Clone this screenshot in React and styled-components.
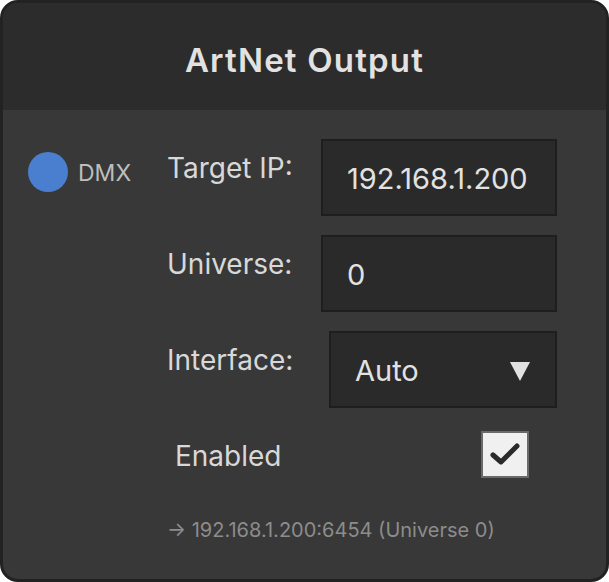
import React from 'react';
import styled, { createGlobalStyle } from 'styled-components';

const GlobalStyle = createGlobalStyle`
  html, body {
    margin: 0;
    padding: 0;
    background: #ffffff;
  }
  * {
    box-sizing: border-box;
  }
`;

const Panel = styled.div`
  width: 609px;
  height: 582px;
  border: 3px solid #222222;
  border-radius: 18px;
  overflow: hidden;
  background: #383838;
  font-family: Inter, "Noto Sans", sans-serif;
  display: flex;
  flex-direction: column;
`;

const Header = styled.header`
  height: 107px;
  padding-top: 7px;
  background: #2c2c2c;
  display: flex;
  align-items: center;
  justify-content: center;
`;

const Title = styled.h1`
  margin: 0;
  font-size: 33px;
  line-height: 1;
  font-weight: 600;
  letter-spacing: 1.2px;
  color: #e2e2e2;
`;

const Body = styled.div`
  flex: 1;
  display: flex;
  padding: 29px 49px 0 25px;
`;

const Status = styled.div`
  width: 139px;
  padding-top: 13px;
`;

const StatusRow = styled.div`
  display: flex;
  align-items: center;
  gap: 10px;
`;

const Dot = styled.span`
  width: 40px;
  height: 40px;
  border-radius: 50%;
  background: ${p => p.color};
  flex-shrink: 0;
`;

const StatusText = styled.span`
  font-size: 23px;
  line-height: 1;
  color: #bdbdbd;
  padding-top: 2px;
`;

const Form = styled.div`
  flex: 1;
  display: flex;
  flex-direction: column;
  gap: 19px;
`;

const Field = styled.div`
  display: flex;
  justify-content: space-between;
  align-items: flex-start;
`;

const Label = styled.label`
  font-size: 28px;
  line-height: 1;
  color: #d8d8d8;
  padding-top: ${p => (p.inline ? 4 : 15)}px;
`;

const Box = styled.div`
  width: ${p => p.width}px;
  height: 77px;
  background: #2a2a2a;
  border: 2px solid #1e1e1e;
  display: flex;
  align-items: center;
  justify-content: space-between;
  padding: 2px 25px 0 24px;
  font-size: 29px;
  line-height: 1;
  color: #e2e2e2;
`;

const Caret = styled.svg`
  width: 20px;
  height: 20px;
  display: block;
`;

const ToggleRow = styled.div`
  height: 54px;
  display: flex;
  align-items: center;
  justify-content: space-between;
  padding: 0 28px 0 8px;
`;

const Checkbox = styled.div`
  width: 48px;
  height: 47px;
  border: 2px solid #6a6a6a;
  background: ${p => (p.checked ? '#f0f0f0' : '#2a2a2a')};
  display: flex;
  align-items: center;
  justify-content: center;
`;

const Summary = styled.div`
  margin-top: 39px;
  font-size: 20px;
  line-height: 1;
  color: #8c8c8c;
`;

const fields = [
  { label: 'Target IP:', value: '192.168.1.200', width: 236 },
  { label: 'Universe:', value: '0', width: 236 },
];

export default function App() {
  const ip = '192.168.1.200';
  const universe = 0;

  return (
    <>
      <GlobalStyle />
      <Panel>
        <Header>
          <Title>ArtNet Output</Title>
        </Header>
        <Body>
          <Status>
            <StatusRow>
              <Dot color="#4a7fd0" />
              <StatusText>DMX</StatusText>
            </StatusRow>
          </Status>
          <Form>
            {fields.map(f => (
              <Field key={f.label}>
                <Label>{f.label}</Label>
                <Box width={f.width}>{f.value}</Box>
              </Field>
            ))}
            <Field>
              <Label>Interface:</Label>
              <Box width={228}>
                <span>Auto</span>
                <Caret viewBox="0 0 20 20">
                  <polygon points="0,1 20,1 10,20" fill="#e2e2e2" />
                </Caret>
              </Box>
            </Field>
            <div>
              <ToggleRow>
                <Label inline>Enabled</Label>
                <Checkbox checked>
                  <svg width="34" height="28" viewBox="0 0 34 28">
                    <path
                      d="M5 15 L13 22 L29 6"
                      fill="none"
                      stroke="#2a2a2a"
                      strokeWidth="5"
                      strokeLinecap="round"
                      strokeLinejoin="round"
                    />
                  </svg>
                </Checkbox>
              </ToggleRow>
              <Summary>→ {ip}:6454 (Universe {universe})</Summary>
            </div>
          </Form>
        </Body>
      </Panel>
    </>
  );
}
